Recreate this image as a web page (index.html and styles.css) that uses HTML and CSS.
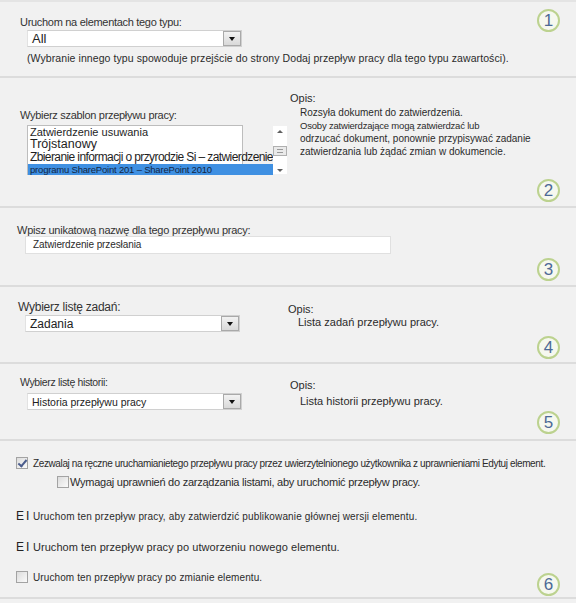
FILE: index.html
```html
<!DOCTYPE html>
<html lang="pl">

<head>
  <meta charset="UTF-8" />
  <meta name="viewport" content="width=device-width, initial-scale=1.0" />
  <title>Dodaj przepływ pracy</title>

  <link rel="stylesheet" href="styles.css">
</head>

<body>
  <!-- Step 1: content type -->
  <div class="section s1">
    <div class="main">
      <div class="label">Uruchom na elementach tego typu:</div>
      <div class="select s-type"><span class="value big">All</span><span class="arrow"></span></div>
      <div class="note">(Wybranie innego typu spowoduje przejście do strony Dodaj przepływ pracy dla tego typu zawartości).</div>
    </div>
    <div class="badge top">1</div>
  </div>

  <!-- Step 2: template -->
  <div class="section s2">
    <div class="main cols">
      <div class="field">
        <div class="label">Wybierz szablon przepływu pracy:</div>
        <div class="listbox">
          <div class="items">
            <div class="item i1">Zatwierdzenie usuwania</div>
            <div class="item i2">Trójstanowy</div>
            <div class="item i3">Zbieranie informacji o przyrodzie Si – zatwierdzenie</div>
            <div class="item selected">programu SharePoint 201 – SharePoint 2010</div>
          </div>
          <div class="scrollbar">
            <span class="up"></span>
            <span class="thumb"></span>
            <span class="down"></span>
          </div>
        </div>
      </div>
      <div class="desc">
        <div class="opis">Opis:</div>
        <div class="text">
          <div>Rozsyła dokument do zatwierdzenia.</div>
          <div class="narrow">Osoby zatwierdzające mogą zatwierdzać lub</div>
          <div>odrzucać dokument, ponownie przypisywać zadanie</div>
          <div>zatwierdzania lub żądać zmian w dokumencie.</div>
        </div>
      </div>
    </div>
    <div class="badge">2</div>
  </div>

  <!-- Step 3: name -->
  <div class="section s3">
    <div class="main">
      <div class="label">Wpisz unikatową nazwę dla tego przepływu pracy:</div>
      <div class="textbox">Zatwierdzenie przesłania</div>
    </div>
    <div class="badge">3</div>
  </div>

  <!-- Step 4: task list -->
  <div class="section s4">
    <div class="main cols">
      <div class="field">
        <div class="label">Wybierz listę zadań:</div>
        <div class="select"><span class="value">Zadania</span><span class="arrow"></span></div>
      </div>
      <div class="desc">
        <div class="opis">Opis:</div>
        <div class="text">Lista zadań przepływu pracy.</div>
      </div>
    </div>
    <div class="badge">4</div>
  </div>

  <!-- Step 5: history list -->
  <div class="section s5">
    <div class="main cols">
      <div class="field">
        <div class="label">Wybierz listę historii:</div>
        <div class="select"><span class="value">Historia przepływu pracy</span><span class="arrow"></span></div>
      </div>
      <div class="desc">
        <div class="opis">Opis:</div>
        <div class="text">Lista historii przepływu pracy.</div>
      </div>
    </div>
    <div class="badge">5</div>
  </div>

  <!-- Step 6: start options -->
  <div class="section s6">
    <div class="main">
      <div class="row r1"><span class="check checked"></span><span class="small">Zezwalaj na ręczne uruchamianietego przepływu pracy przez uwierzytelnionego użytkownika z uprawnieniami Edytuj element.</span></div>
      <div class="row r2"><span class="check"></span><span class="mid">Wymagaj uprawnień do zarządzania listami, aby uruchomić przepływ pracy.</span></div>
      <div class="row r3"><span class="ei">EI</span><span class="small">Uruchom ten przepływ pracy, aby zatwierdzić publikowanie głównej wersji elementu.</span></div>
      <div class="row r4"><span class="ei">EI</span><span class="mid">Uruchom ten przepływ pracy po utworzeniu nowego elementu.</span></div>
      <div class="row r5"><span class="check"></span><span class="small">Uruchom ten przepływ pracy po zmianie elementu.</span></div>
    </div>
    <div class="badge">6</div>
  </div>
</body>

</html>
```

FILE: styles.css
```css
* {
  box-sizing: border-box;
}

body {
  margin: 0;
  width: 576px;
  background: #f1f1f1;
  font-family: "Liberation Sans", Arial, sans-serif;
  color: #2b2b2b;
  border-top: 2px solid #e4e4e4;
}

/* each numbered step */
.section {
  display: grid;
  grid-template-columns: minmax(0, 1fr) auto;
  border-bottom: 2px solid #dcdcdc;
  padding-left: 20px;
}

.s1 { height: 76px; }
.s1 .main { padding-top: 14px; }
.s2 { height: 130px; }
.s3 { height: 79px; padding-left: 17px; }
.s3 .main { padding-top: 16px; }
.s4 { height: 77px; padding-left: 18px; }
.s5 { height: 77px; }
.s6 { height: 158px; padding-left: 16px; }
.s6 .main { padding-top: 15px; }

/* step number circle */
.badge {
  width: 23px;
  height: 23px;
  border: 2px solid #bcd28f;
  border-radius: 50%;
  background: #f6f8ef;
  color: #4d6a96;
  font-size: 17px;
  line-height: 19px;
  text-align: center;
  align-self: end;
  margin: 0 16px 4px 0;
}

.badge.top {
  align-self: start;
  margin-top: 7px;
}

.s4 .badge { margin-bottom: 3px; }
.s5 .badge { margin-bottom: 5px; }
.s6 .badge { margin-bottom: 1px; }

.label {
  font-size: 11px;
  line-height: 13px;
  color: #333;
  letter-spacing: -0.3px;
}

.note {
  margin: 4px 0 0 7px;
  font-size: 10.5px;
  line-height: 14px;
  letter-spacing: 0.08px;
}

/* two columns: field and description */
.cols {
  display: flex;
}

.field {
  width: 270px;
}

.opis {
  font-size: 11px;
  line-height: 13px;
}

.desc .text {
  padding-left: 10px;
  font-size: 11px;
  line-height: 13px;
}

/* fake drop-down */
.select {
  display: flex;
  align-items: center;
  justify-content: space-between;
  width: 215px;
  height: 17px;
  margin-left: 7px;
  background: #fff;
  border: 1px solid #d0d0d0;
  border-left-color: #e2e2e2;
}

.select .value {
  padding-left: 4px;
  font-size: 12px;
  color: #222;
}

.select .value.big {
  font-size: 13px;
}

.select .arrow {
  position: relative;
  width: 18px;
  height: 15px;
  border: 1px solid #a9a9a9;
  background: linear-gradient(#f2f2f2, #d9d9d9);
}

.select .arrow::after {
  content: '';
  position: absolute;
  left: 5px;
  top: 5px;
  border-left: 3.5px solid transparent;
  border-right: 3.5px solid transparent;
  border-top: 4px solid #111;
}

.s1 .select { margin-top: 1px; }

/* step 2 list */
.s2 .field { padding-top: 31px; }
.s2 .desc { padding-top: 14px; }
.s2 .desc .text {
  margin-top: 1px;
  font-size: 10px;
  line-height: 13px;
}

.s2 .desc .text .narrow {
  font-size: 9.5px;
  letter-spacing: -0.2px;
}

.listbox {
  display: flex;
  width: 216px;
  height: 50px;
  margin: 3px 0 0 7px;
  background: #fff;
  border: 1px solid #bdbdbd;
}

.items {
  flex: 1;
  white-space: nowrap;
}

.item {
  padding-left: 2px;
  color: #1e1e1e;
}

.i1 { font-size: 11px; line-height: 12px; }
.i2 { font-size: 12.5px; line-height: 13px; }
.i3 { font-size: 12px; line-height: 12.5px; letter-spacing: -0.6px; }

.item.selected {
  font-size: 9.5px;
  line-height: 11.5px;
  background: #3f90e2;
  color: #142642;
  letter-spacing: -0.2px;
}

.scrollbar {
  display: flex;
  flex-direction: column;
  align-items: center;
  justify-content: space-between;
  width: 17px;
  padding: 4px 0 2px;
  background: #fff;
}

.scrollbar .up,
.scrollbar .down {
  width: 0;
  height: 0;
  border-left: 3px solid transparent;
  border-right: 3px solid transparent;
}

.scrollbar .up { border-bottom: 3px solid #606060; }
.scrollbar .down { border-top: 3px solid #606060; }

.scrollbar .thumb {
  width: 14px;
  height: 10px;
  border: 1px solid #b0b0b0;
  background: repeating-linear-gradient(#eaeaea 0 2px, #9a9a9a 2px 3px);
  background-size: 6px 9px;
  background-position: center;
  background-repeat: no-repeat;
  background-color: #eaeaea;
}

/* step 3 text box */
.textbox {
  width: 366px;
  height: 18px;
  margin-left: 8px;
  padding-left: 7px;
  background: #fff;
  border: 1px solid #e0e0e0;
  font-size: 10px;
  line-height: 16px;
  letter-spacing: -0.1px;
}

.s3 .label { line-height: 12px; letter-spacing: -0.25px; }

/* step 4 */
.s4 .field { padding-top: 13px; }
.s4 .label { font-size: 12px; line-height: 14px; letter-spacing: -0.25px; }
.s4 .select { margin-top: 1px; }
.s4 .desc { padding-top: 16px; }

/* step 5 */
.s5 .field { padding-top: 12px; }
.s5 .label { font-size: 10.5px; letter-spacing: -0.35px; }
.s5 .select { margin-top: 4px; }
.s5 .select .value { font-size: 10.5px; }
.s5 .desc { padding-top: 15px; }
.s5 .desc .text { margin-top: 3px; }

/* step 6 options */
.row {
  display: flex;
  align-items: center;
  height: 14px;
  white-space: nowrap;
}

.r2 { margin: 5px 0 0 41px; }
.r3 { margin-top: 20px; }
.r4 { margin-top: 17px; }
.r5 { margin-top: 16px; }

.check {
  position: relative;
  flex: none;
  width: 12px;
  height: 12px;
  margin-right: 5px;
  border: 1px solid #a3a3a3;
  background: linear-gradient(135deg, #dcdcdc, #fafafa);
}

.check.checked::after {
  content: '';
  position: absolute;
  left: 3px;
  top: 0;
  width: 3px;
  height: 7px;
  border-right: 2px solid #4a5c8c;
  border-bottom: 2px solid #4a5c8c;
  transform: rotate(40deg);
}

.ei {
  width: 17px;
  font-size: 12px;
  letter-spacing: 2px;
  color: #222;
}

.small {
  font-size: 10px;
  letter-spacing: 0.15px;
}

.mid {
  font-size: 11px;
  letter-spacing: 0.05px;
}

.r1 .small { letter-spacing: -0.38px; }
.r5 .small { letter-spacing: 0.1px; }
.r2 .check { margin-right: 1px; }
.r2 .mid { letter-spacing: -0.25px; }
```
